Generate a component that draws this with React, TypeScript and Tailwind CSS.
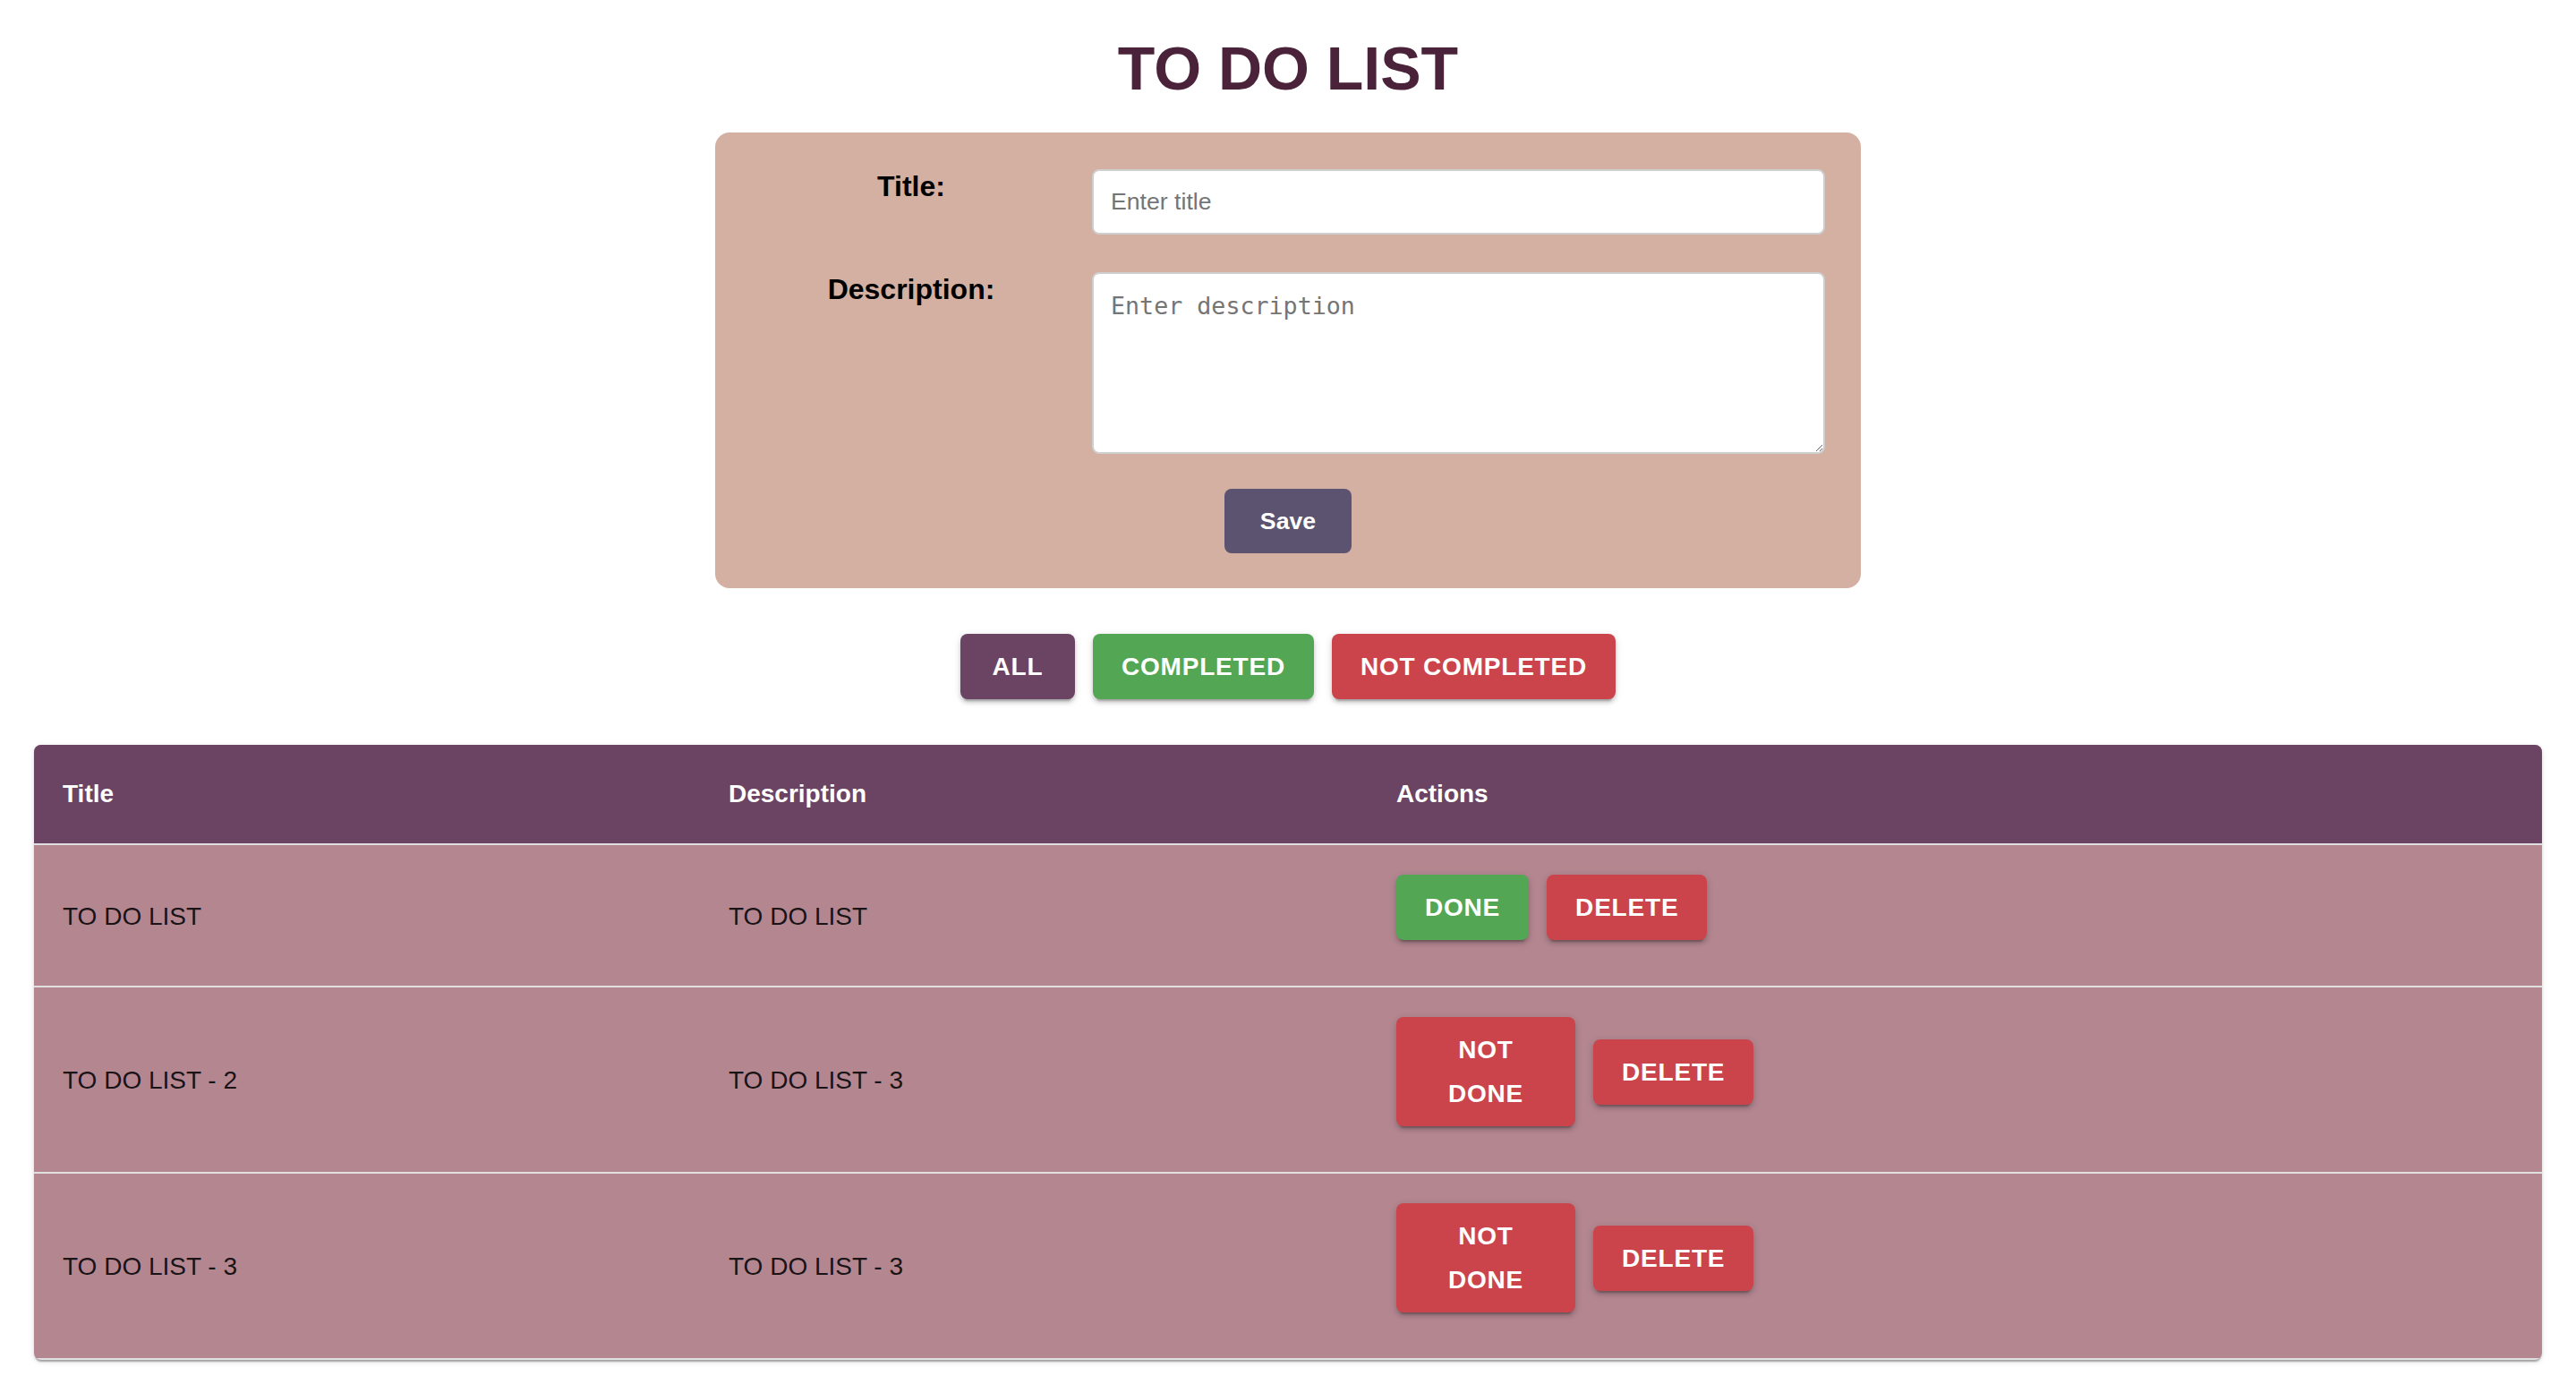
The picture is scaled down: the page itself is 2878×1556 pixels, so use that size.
import React, { useState } from "react";

type Todo = { id: number; title: string; description: string; done: boolean };

const initialTodos: Todo[] = [
  { id: 1, title: "TO DO LIST", description: "TO DO LIST", done: false },
  { id: 2, title: "TO DO LIST - 2", description: "TO DO LIST - 3", done: true },
  { id: 3, title: "TO DO LIST - 3", description: "TO DO LIST - 3", done: true },
];

const btnShadow =
  "shadow-[0_6px_2px_-4px_rgba(0,0,0,0.2),0_4px_4px_0_rgba(0,0,0,0.14),0_2px_10px_0_rgba(0,0,0,0.12)]";

const ActionButton = ({
  color,
  className = "",
  children,
  onClick,
}: {
  color: "green" | "red" | "purple";
  className?: string;
  children: React.ReactNode;
  onClick?: () => void;
}) => {
  const bg =
    color === "green" ? "bg-[#53a653]" : color === "red" ? "bg-[#cb444b]" : "bg-[#6b4463]";
  return (
    <button
      onClick={onClick}
      className={`${bg} ${btnShadow} ${className} rounded-[8px] px-[32px] py-[12px] text-[28px] leading-[49px] font-bold tracking-[0.8px] text-white uppercase text-center`}
    >
      {children}
    </button>
  );
};

export default function App() {
  const [todos, setTodos] = useState<Todo[]>(initialTodos);
  const [title, setTitle] = useState("");
  const [description, setDescription] = useState("");

  const save = () => {
    if (!title) return;
    setTodos([...todos, { id: Date.now(), title, description, done: false }]);
    setTitle("");
    setDescription("");
  };

  return (
    <div className="min-h-screen bg-white font-['Liberation_Sans',Arial,sans-serif] pt-[37px] pb-[36px]">
      <h1 className="text-center text-[68px] leading-[78px] font-bold text-[#4a2239]">TO DO LIST</h1>

      <div className="mx-auto mt-[33px] w-[1280px] rounded-[16px] bg-[#d4b0a2] px-[40px] pt-[41px] pb-[39px]">
        <div className="grid grid-cols-[358px_1fr] gap-x-[23px] gap-y-[42px]">
          <label className="pt-[1px] text-center text-[32px] leading-[37px] font-bold text-black">Title:</label>
          <input
            value={title}
            onChange={(e) => setTitle(e.target.value)}
            placeholder="Enter title"
            className="h-[73px] w-full rounded-[8px] border-2 border-[#cfcfcf] bg-white px-[19px] text-[26.67px] font-['Liberation_Sans',Arial,sans-serif] text-black outline-none placeholder:text-[#757575]"
          />
          <label className="pt-[1px] text-center text-[32px] leading-[37px] font-bold text-black">Description:</label>
          <textarea
            value={description}
            onChange={(e) => setDescription(e.target.value)}
            placeholder="Enter description"
            className="h-[203px] w-full rounded-[8px] border-2 border-[#cfcfcf] bg-white px-[19px] pt-[20px] pb-[16px] text-[26.67px] leading-[32px] font-['DejaVu_Sans_Mono',monospace] text-black outline-none placeholder:text-[#757575]"
          />
        </div>
        <div className="mt-[39px] flex justify-center">
          <button
            onClick={save}
            className="h-[72px] w-[142px] rounded-[8px] bg-[#5b5370] text-[26.67px] font-bold text-white"
          >
            Save
          </button>
        </div>
      </div>

      <div className="mt-[51px] flex justify-center gap-[20px]">
        <ActionButton color="purple" className="min-w-[128px]">All</ActionButton>
        <ActionButton color="green">Completed</ActionButton>
        <ActionButton color="red">Not Completed</ActionButton>
      </div>

      <div className="mx-[38px] mt-[51px] overflow-hidden rounded-[8px] bg-[#b38690] shadow-[0_4px_2px_-2px_rgba(0,0,0,0.2),0_2px_2px_0_rgba(0,0,0,0.14),0_2px_6px_0_rgba(0,0,0,0.12)]">
        <div className="grid h-[112px] grid-cols-[744px_746px_1fr] border-b-2 border-[#e0e0e0] bg-[#6b4463] text-[28px] font-bold text-white">
          <div className="flex items-center px-[32px]">Title</div>
          <div className="flex items-center px-[32px]">Description</div>
          <div className="flex items-center px-[32px]">Actions</div>
        </div>
        {todos.map((t) => (
          <div
            key={t.id}
            className="grid grid-cols-[744px_746px_1fr] border-b-2 border-[#e0e0e0] text-[28px] text-[rgba(0,0,0,0.87)]"
          >
            <div className="flex items-center px-[32px] pt-[2px]">{t.title}</div>
            <div className="flex items-center px-[32px] pt-[2px]">{t.description}</div>
            <div className="flex items-center gap-[20px] px-[32px] pt-[33px] pb-[51px]">
              {t.done ? (
                <ActionButton
                  color="red"
                  className="w-[200px]"
                  onClick={() => setTodos(todos.map((x) => (x.id === t.id ? { ...x, done: false } : x)))}
                >
                  Not Done
                </ActionButton>
              ) : (
                <ActionButton
                  color="green"
                  onClick={() => setTodos(todos.map((x) => (x.id === t.id ? { ...x, done: true } : x)))}
                >
                  Done
                </ActionButton>
              )}
              <ActionButton color="red" onClick={() => setTodos(todos.filter((x) => x.id !== t.id))}>
                Delete
              </ActionButton>
            </div>
          </div>
        ))}
      </div>
    </div>
  );
}
